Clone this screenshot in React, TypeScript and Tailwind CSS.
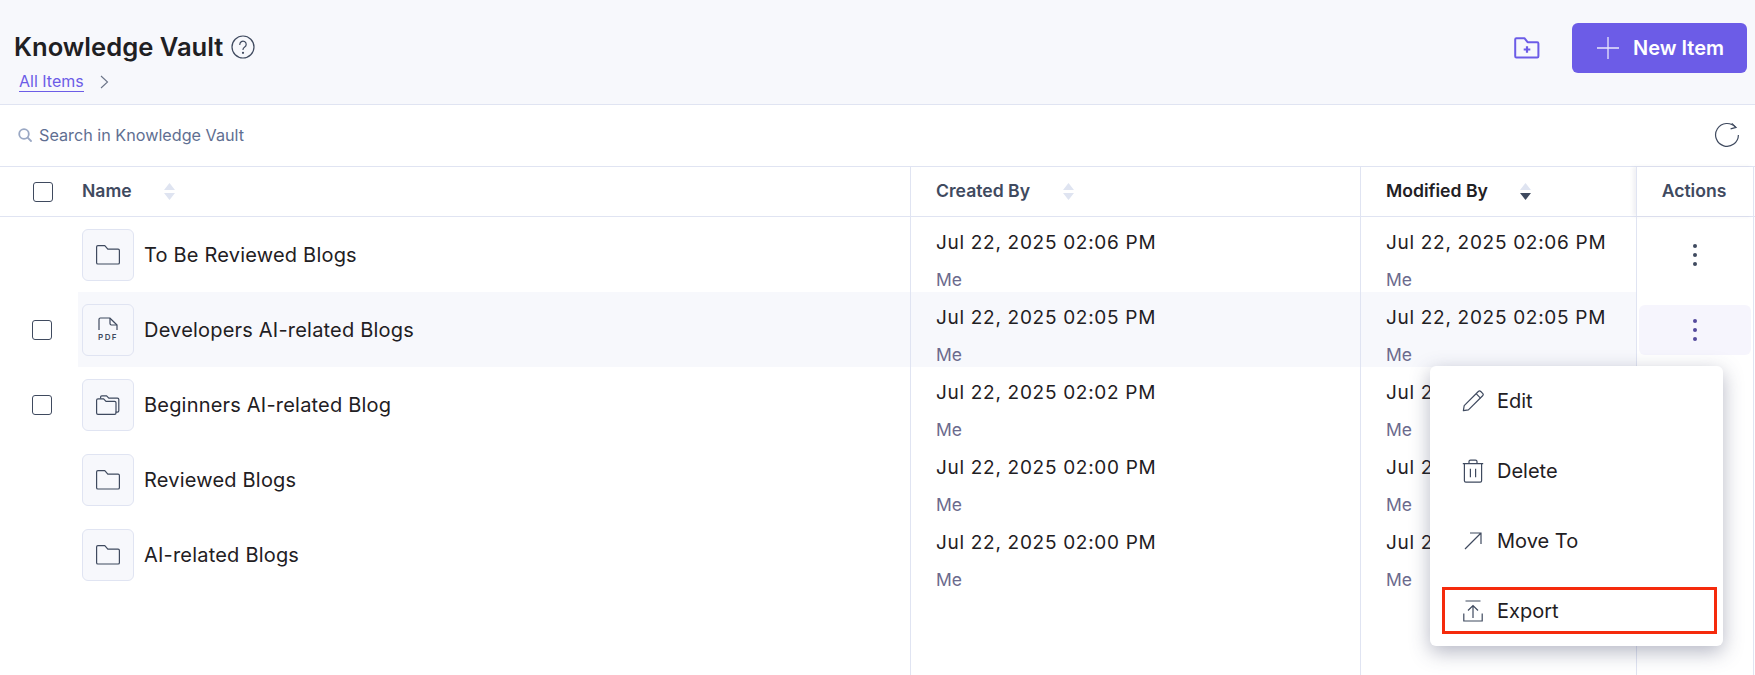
import { ReactNode } from "react";

const grid = "grid grid-cols-[78px_833px_450px_275px_117px_1fr]";
const line = "border-[#e0e4f2]";

const FolderIcon = () => (
  <svg width="26" height="22" viewBox="0 0 26 22" fill="none" stroke="#3f4a5f" strokeWidth="1.2">
    <path d="M1.600 3c0-.8.500-1.300 1.300-1.300h6.900l3 3.400h10.300c.8 0 1.300.5 1.300 1.300v12.300c0 .8-.5 1.300-1.300 1.300H2.900c-.8 0-1.300-.5-1.300-1.300z" strokeLinejoin="round" />
  </svg>
);

const FolderStackIcon = () => (
  <svg width="26" height="22" viewBox="0 0 26 22" fill="none" stroke="#3f4a5f" strokeWidth="1.2" strokeLinejoin="round">
    <path d="M1.6 6.2c0-.8.6-1.4 1.4-1.4h5.6l2.4 2.6h8.6c.8 0 1.4.6 1.4 1.4v10.2c0 .8-.6 1.4-1.4 1.4H3c-.8 0-1.4-.6-1.4-1.4z" />
    <path d="M5.6 4.6V3c0-.7.5-1.2 1.2-1.2h4.8l2.2 2.400h8.600c.8 0 1.400.6 1.400 1.400v11.200c0 .8-.6 1.400-1.400 1.400h-1.800" />
  </svg>
);

const PdfIcon = () => (
  <div className="flex flex-col items-center">
    <svg width="20" height="14" viewBox="0 0 20 14" fill="none" stroke="#3f4a5f" strokeWidth="1.2" strokeLinejoin="round">
      <path d="M1 13V2.4C1 1.6 1.6 1 2.4 1h9.4L19 8v5" />
      <path d="M12 1.2v5.4c0 .8.6 1.4 1.4 1.4H19" />
    </svg>
    <span className="mt-[2px] text-[8px] leading-[9px] font-semibold tracking-[1.4px] text-[#3f4a5f]">PDF</span>
  </div>
);

const SortIcon = ({ active }: { active?: boolean }) => (
  <svg width="11" height="17" viewBox="0 0 11 17">
    <path d="M5.5 0 11 7H0z" fill="#dfe4f1" />
    <path d="M5.5 17 0 10h11z" fill={active ? "#3f4a5f" : "#dfe4f1"} />
  </svg>
);

const Checkbox = ({ className }: { className?: string }) => (
  <div className={`h-5 w-5 rounded-[3px] border border-[#3f4a5f] bg-white ${className ?? ""}`} />
);

const rows = [
  { name: "To Be Reviewed Blogs", time: "02:06 PM", icon: <FolderIcon />, check: false },
  { name: "Developers AI-related Blogs", time: "02:05 PM", icon: <PdfIcon />, check: true, active: true },
  { name: "Beginners AI-related Blog", time: "02:02 PM", icon: <FolderStackIcon />, check: true },
  { name: "Reviewed Blogs", time: "02:00 PM", icon: <FolderIcon />, check: false },
  { name: "AI-related Blogs", time: "02:00 PM", icon: <FolderIcon />, check: false },
];

const DateCell = ({ time, active, border }: { time: string; active?: boolean; border?: boolean }) => (
  <div className={`flex flex-col pl-[25px] pt-[12px] ${border ? `border-r ${line}` : ""} ${active ? "bg-[#f7f8fc]" : ""}`}>
    <span className="text-[19px] leading-[27px] tracking-[0.7px] text-[#1f2023]">Jul 22, 2025 {time}</span>
    <span className="mt-[14px] text-[17.5px] leading-[20px] text-[#6b6a8d]">Me</span>
  </div>
);

const MenuItem = ({ icon, label, boxed }: { icon: ReactNode; label: string; boxed?: boolean }) => (
  <div className={`flex h-[47px] items-center text-[20px] text-[#1f2023] ${boxed ? "border-[3px] border-[#f52a0c] pl-[10px]" : "pl-[25px]"}`}>
    <div className="flex w-[36px] justify-center">{icon}</div>
    <span className="ml-[6px]">{label}</span>
  </div>
);

const App = () => {
  return (
    <div className="relative flex h-[675px] w-full flex-col overflow-hidden bg-white font-['Inter',sans-serif]">
      <div className={`flex h-[105px] shrink-0 items-start justify-between border-b bg-[#f7f8fc] pl-[14px] pr-[8px] ${line}`}>
        <div className="pt-[31px]">
          <div className="flex items-center gap-[8px]">
            <h1 className="text-[25.6px] leading-[32px] font-semibold text-[#1f2023]">Knowledge Vault</h1>
            <svg width="24" height="24" viewBox="0 0 24 24" fill="none" stroke="#3f4a5f" strokeWidth="1.2" strokeLinecap="round">
              <circle cx="12" cy="12" r="11" />
              <path d="M8.8 9.4a3.2 3.2 0 1 1 4.9 2.7c-1 .7-1.7 1.2-1.7 2.4" />
              <circle cx="12" cy="17.8" r=".5" fill="#3f4a5f" />
            </svg>
          </div>
          <div className="mt-[8px] flex items-center pl-[5px]">
            <span className="border-b border-[#6c5ce7] text-[16px] leading-[20px] text-[#6c5ce7]">All Items</span>
            <svg className="ml-[16px]" width="9" height="14" viewBox="0 0 9 14" fill="none" stroke="#6b7488" strokeWidth="1.1">
              <path d="m1 1 6.5 6L1 13" />
            </svg>
          </div>
        </div>
        <div className="flex items-center pt-[23px]">
          <svg width="26" height="22" viewBox="0 0 26 22" fill="none" stroke="#6c5ce7" strokeWidth="2" strokeLinejoin="round">
            <path d="M1.2 2.4c0-.7.5-1.2 1.2-1.2h8l3.2 4h9.6c.7 0 1.2.5 1.2 1.2v12.8c0 .7-.5 1.2-1.2 1.2H2.4c-.7 0-1.200-.5-1.200-1.200z" />
            <path d="M13 9.200v6.600M9.700 12.500h6.600" strokeWidth="2.200" />
          </svg>
          <button className="ml-[32px] flex h-[50px] w-[175px] items-center rounded-[6px] bg-[#6c5ce7] pl-[25px] text-[20px] font-semibold text-white">
            <svg width="22" height="22" viewBox="0 0 22 22" fill="none" stroke="#ffffff" strokeOpacity="0.85" strokeWidth="1.300">
              <path d="M11 0v22M0 11h22" />
            </svg>
            <span className="ml-[14px]">New Item</span>
          </button>
        </div>
      </div>

      <div className={`flex h-[62px] shrink-0 items-center justify-between border-b pb-[1px] pl-[18px] pr-[15px] ${line}`}>
        <div className="flex items-center gap-[7px]">
          <svg width="14" height="14" viewBox="0 0 14 14" fill="none" stroke="#9aa8c4" strokeWidth="1.800" strokeLinecap="round">
            <circle cx="6" cy="6" r="4.800" />
            <path d="m9.700 9.700 3.300 3.300" />
          </svg>
          <span className="text-[16.2px] text-[#5f6f92]">Search in Knowledge Vault</span>
        </div>
        <svg width="26" height="26" viewBox="0 0 26 26" fill="none" stroke="#3f4a5f" strokeWidth="1.200">
          <path d="M21.600 5.400A11.400 11.400 0 1 0 24.400 13" />
          <path d="m17.800 1.400 4.200 4-5.400 1.400" />
        </svg>
      </div>

      <div className={`${grid} h-[50px] shrink-0 items-stretch border-b text-[17.6px] font-semibold ${line}`}>
        <div className="flex items-center pl-[33px]">
          <Checkbox />
        </div>
        <div className={`flex items-center border-r pb-[1px] pl-[4px] text-[#3f4a5f] ${line}`}>
          Name
          <span className="ml-[32px] flex"><SortIcon /></span>
        </div>
        <div className={`flex items-center border-r pb-[1px] pl-[25px] text-[#3f4a5f] ${line}`}>
          Created By
          <span className="ml-[33px] flex"><SortIcon /></span>
        </div>
        <div className="flex items-center pb-[1px] pl-[25px] text-[#1f2023]">
          Modified By
          <span className="ml-[32px] flex"><SortIcon active /></span>
        </div>
        <div className={`flex items-center justify-center border-l pb-[1px] pr-[2px] text-[#3f4a5f] shadow-[-3px_0_4px_rgba(60,70,100,0.08)] ${line}`}>Actions</div>
        <div className={`border-l ${line}`} />
      </div>

      {rows.map((row) => (
        <div key={row.name} className={`${grid} h-[75px] shrink-0`}>
          <div className="flex items-center pl-[32px]">{row.check && <Checkbox />}</div>
          <div className={`flex items-center border-r pl-[4px] ${line} ${row.active ? "bg-[#f7f8fc]" : ""}`}>
            <div className={`flex h-[52px] w-[52px] items-center justify-center rounded-[6px] border bg-[#f7f8fc] ${line}`}>
              {row.icon}
            </div>
            <span className="ml-[10px] text-[20px] tracking-[0.2px] text-[#1f2023]">{row.name}</span>
          </div>
          <DateCell time={row.time} active={row.active} border />
          <DateCell time={row.time} active={row.active} />
          <div className={`flex items-center justify-center border-l ${line} ${row.active ? "px-[2px]" : ""}`}>
            <div className={`flex h-[50px] w-full items-center justify-center rounded-[6px] ${row.active ? "bg-[#f6f5fd]" : ""}`}>
              <svg width="6" height="24" viewBox="0 0 6 24" fill={row.active ? "#544a9c" : "#3f4a5f"}>
                <circle cx="3" cy="3" r="2" />
                <circle cx="3" cy="12" r="2" />
                <circle cx="3" cy="21" r="2" />
              </svg>
            </div>
          </div>
          <div className={`border-l ${line}`} />
        </div>
      ))}

      <div className={`${grid} flex-1`}>
        <div />
        <div className={`border-r ${line}`} />
        <div className={`border-r ${line}`} />
        <div />
        <div className={`border-l ${line}`} />
        <div className={`border-l ${line}`} />
      </div>

      <div className="absolute left-[1430px] top-[366px] flex h-[280px] w-[293px] flex-col rounded-[6px] bg-white pt-[11px] shadow-[0_6px_20px_rgba(60,65,100,0.38)]">
        <div className="flex flex-col gap-[23px]">
          <MenuItem
            label="Edit"
            icon={
              <svg width="22" height="22" viewBox="0 0 24 24" fill="none" stroke="#3f4a5f" strokeWidth="1.300" strokeLinejoin="round">
                <path d="M1.500 22.500 2.400 17 17.800 1.600c.8-.8 1.900-.8 2.700 0l2 2c.8.8.8 1.900 0 2.700L7 21.700z" />
                <path d="m15.400 4 4.800 4.800" />
              </svg>
            }
          />
          <MenuItem
            label="Delete"
            icon={
              <svg width="22" height="24" viewBox="0 0 22 24" fill="none" stroke="#3f4a5f" strokeWidth="1.200" strokeLinejoin="round">
                <path d="M0.800 4.600h20.400M7 4.400V2.600c0-.9.600-1.500 1.500-1.500h5c.9 0 1.500.6 1.500 1.500v1.800" />
                <path d="M2.400 4.600v17.200c0 .9.500 1.400 1.400 1.400h14.400c.9 0 1.400-.5 1.400-1.400V4.600" />
                <path d="M8.400 9.800v8.400M13.600 9.800v8.400" />
              </svg>
            }
          />
          <MenuItem
            label="Move To"
            icon={
              <svg width="18" height="18" viewBox="0 0 18 18" fill="none" stroke="#3f4a5f" strokeWidth="1.200">
                <path d="M1 17 17 1M6 1h11v11" />
              </svg>
            }
          />
        </div>
        <div className="ml-[12px] mr-[6px] mt-[23px]">
          <MenuItem
            boxed
            label="Export"
            icon={
              <svg width="20" height="22" viewBox="0 0 20 22" fill="none" stroke="#3f4a5f" strokeWidth="1.200">
                <path d="M2.500 1h15M10 18V6M5 10.500 10 5.500l5 5M.8 13.500v7.500h18.400v-7.500" />
              </svg>
            }
          />
        </div>
      </div>
    </div>
  );
};

export default App;
